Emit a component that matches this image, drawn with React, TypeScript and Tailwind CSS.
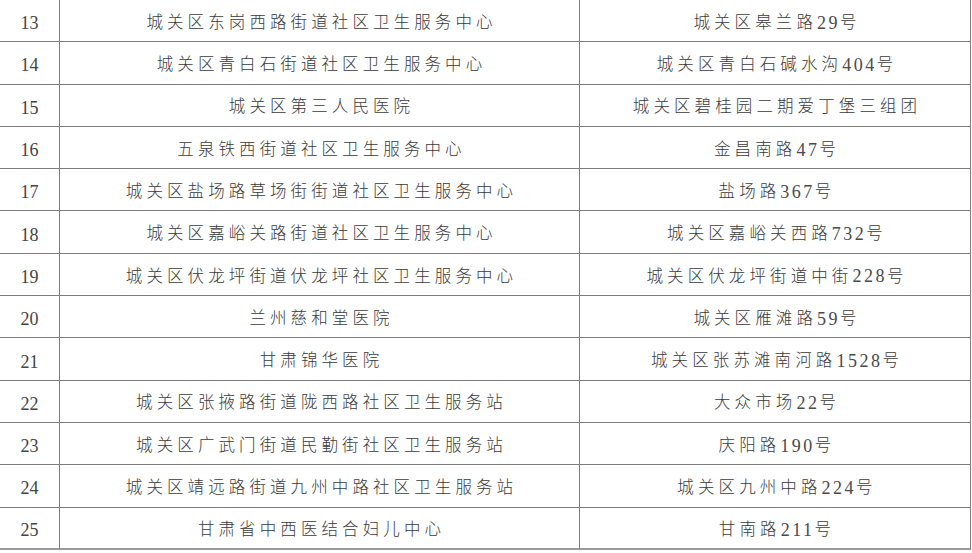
const ROWS: [string, string, string][] = [
  ["13", "城关区东岗西路街道社区卫生服务中心", "城关区皋兰路29号"],
  ["14", "城关区青白石街道社区卫生服务中心", "城关区青白石碱水沟404号"],
  ["15", "城关区第三人民医院", "城关区碧桂园二期爱丁堡三组团"],
  ["16", "五泉铁西街道社区卫生服务中心", "金昌南路47号"],
  ["17", "城关区盐场路草场街街道社区卫生服务中心", "盐场路367号"],
  ["18", "城关区嘉峪关路街道社区卫生服务中心", "城关区嘉峪关西路732号"],
  ["19", "城关区伏龙坪街道伏龙坪社区卫生服务中心", "城关区伏龙坪街道中街228号"],
  ["20", "兰州慈和堂医院", "城关区雁滩路59号"],
  ["21", "甘肃锦华医院", "城关区张苏滩南河路1528号"],
  ["22", "城关区张掖路街道陇西路社区卫生服务站", "大众市场22号"],
  ["23", "城关区广武门街道民勤街社区卫生服务站", "庆阳路190号"],
  ["24", "城关区靖远路街道九州中路社区卫生服务站", "城关区九州中路224号"],
  ["25", "甘肃省中西医结合妇儿中心", "甘南路211号"],
];

const font = { fontFamily: '"Liberation Serif", "Noto Sans CJK SC", serif' };

// digits run a little bigger and tighter than the CJK glyphs
function Mixed({ text }: { text: string }) {
  const parts = text.split(/(\d+)/).filter(Boolean);
  return (
    <>
      {parts.map((p, i) =>
        /^\d+$/.test(p) ? (
          <span key={i} className="text-[18px] tracking-[2.5px] text-[#4a4a4a]">{p}</span>
        ) : (
          <span key={i}>{p}</span>
        )
      )}
    </>
  );
}

export default function App() {
  return (
    <div className="w-[972px] h-[553px] bg-white overflow-hidden text-[#3a3a3a]" style={font}>
      <div className="grid grid-cols-[60px_520px_391px]">
        {ROWS.map(([no, name, addr], i) => {
          const last = i === ROWS.length - 1;
          const b = last ? "border-b-2 border-b-[#9a9a9a]" : "border-b border-b-[#7d7d7d]";
          return (
            <div key={no} className="contents">
              <div className={`h-[42.3px] flex items-center justify-center pt-[6px] border-r border-r-[#7d7d7d] ${b} text-[18px] text-[#444]`}>
                {no}
              </div>
              <div className={`h-[42.3px] flex items-center justify-center pt-[5px] pl-[4px] border-r border-r-[#7d7d7d] ${b} text-[16.5px] tracking-[4.1px] font-light`}>
                {name}
              </div>
              <div className={`h-[42.3px] flex items-center justify-center pt-[5px] pl-[4px] border-r border-r-[#7d7d7d] ${b} text-[16.5px] tracking-[4.1px] font-light`}>
                <Mixed text={addr} />
              </div>
            </div>
          );
        })}
      </div>
    </div>
  );
}
